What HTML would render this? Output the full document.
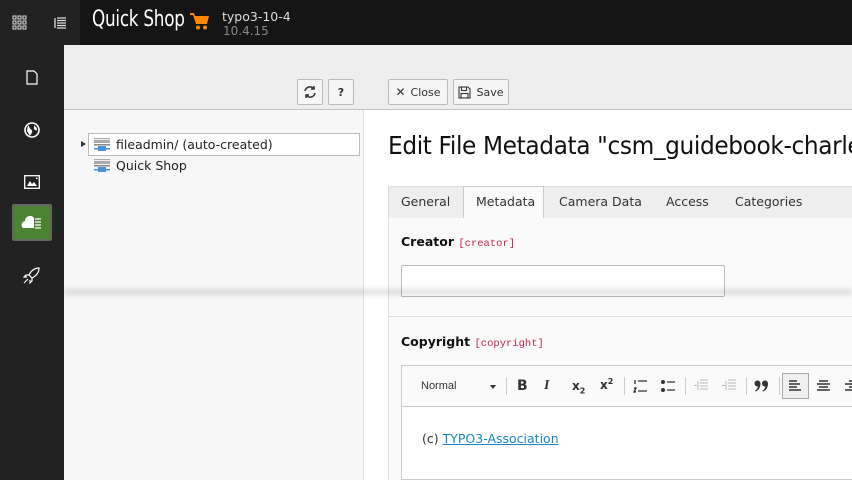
<!DOCTYPE html>
<html><head><meta charset="utf-8"><style>
*{box-sizing:border-box;margin:0;padding:0}
body{width:852px;height:480px;overflow:hidden;font-family:"DejaVu Sans","Liberation Sans",sans-serif;font-size:12px;color:#333;background:#fff;position:relative}
.abs{position:absolute}
.top{left:0;top:0;width:852px;height:45px;background:#151515}
.tl{left:0;top:0;width:80px;height:45px;background:#222}
.side{left:0;top:45px;width:64px;height:435px;background:#222}
.dh{left:64px;top:45px;width:788px;height:65px;background:#eee;border-bottom:1px solid #c3c3c3}
.tree{left:64px;top:110px;width:300px;height:370px;background:#f7f7f7;border-right:1px solid #e0e0e0}
.btn{background:#f5f5f5;border:1px solid #bbb;border-radius:2px;height:26px;font-size:11px;color:#333;display:flex;align-items:center;justify-content:center}
.tab{top:186px;height:32px;line-height:30px;font-size:12.5px;color:#333;padding:0 12px}
</style></head><body>
<div class="abs top"></div><div class="abs tl"></div>
<div class="abs side"></div>
<svg class="abs" style="left:12px;top:15px" width="15" height="15" viewBox="0 0 15 15" fill="none" stroke="#ddd" stroke-width="1"><rect x="1" y="1" width="3" height="3"/><rect x="6" y="1" width="3" height="3"/><rect x="11" y="1" width="3" height="3"/><rect x="1" y="6" width="3" height="3"/><rect x="6" y="6" width="3" height="3"/><rect x="11" y="6" width="3" height="3"/><rect x="1" y="11" width="3" height="3"/><rect x="6" y="11" width="3" height="3"/><rect x="11" y="11" width="3" height="3"/></svg>
<svg class="abs" style="left:54px;top:17px" width="13" height="12" viewBox="0 0 13 12" stroke="#ddd" stroke-width="1.3"><path d="M1 1v10M3 1h9M3 3.5h9M3 6h9M3 8.5h9M3 11h9"/></svg>
<div class="abs" style="left:92px;top:7px;font-family:'DejaVu Sans Condensed','Liberation Sans Narrow',sans-serif;font-size:22px;color:#fff;letter-spacing:-0.3px;transform:scaleX(0.85);transform-origin:left;white-space:nowrap">Quick Shop</div>
<svg class="abs" style="left:190px;top:13px" width="19" height="17" viewBox="0 0 19 17" fill="#ff8700"><path d="M0 0h4l1 3h14l-2 8H6L3 2H0z"/><circle cx="8" cy="14.5" r="2"/><circle cx="15" cy="14.5" r="2"/></svg>
<div class="abs" style="left:222px;top:9px;color:#ddd;font-size:12.5px">typo3-10-4</div>
<div class="abs" style="left:223px;top:24px;color:#888;font-size:12px">10.4.15</div>
<svg class="abs" style="left:26px;top:70px" width="12" height="15" viewBox="0 0 12 15" fill="none" stroke="#fff" stroke-width="1.2"><path d="M1 1h7l3 3v10H1z"/></svg>
<svg class="abs" style="left:24px;top:122px" width="16" height="16" viewBox="0 0 16 16"><circle cx="8" cy="8" r="7" fill="none" stroke="#fff" stroke-width="1.6"/><path d="M4 3.5c2 1 1 3 3 4s1 3 0 5l-1.5 1C5 11 3 10.5 3 8.5zM10 3c1 2 3 2 3 5-1 1-2 0-3-1z" fill="#fff"/></svg>
<svg class="abs" style="left:24px;top:175px" width="16" height="14" viewBox="0 0 16 14"><rect x="0.7" y="0.7" width="14.6" height="12.6" fill="none" stroke="#fff" stroke-width="1.3"/><path d="M3 11l3-5 2 3 2-2 3 4z" fill="#fff"/><rect x="12" y="2.5" width="1.5" height="1.5" fill="#fff"/></svg>
<div class="abs" style="left:12px;top:204px;width:40px;height:37px;background:#4b8333;border:2px solid #666;border-radius:2px"></div>
<svg class="abs" style="left:21px;top:214px" width="22" height="16" viewBox="0 0 22 16"><path d="M2 14a4 4 0 0 1 2-7 5 5 0 0 1 9-3v10z" fill="#fff"/><path d="M14 5h6M14 8h6M14 11h6M14 14h6" stroke="#fff" stroke-width="1.2"/></svg>
<svg class="abs" style="left:23px;top:267px" width="17" height="17" viewBox="0 0 17 17" fill="none" stroke="#fff" stroke-width="1.2"><path d="M16 1c-5 0-8 3-10 7l3 3c4-2 7-5 7-10zM6 8H3l-2 2 3 0M9 11v3l-2 2 0-3M5 12l-4 4"/></svg>
<div class="abs dh"></div>
<div class="abs tree"></div>
<div class="abs btn" style="left:297px;top:79px;width:26px"><svg width="14" height="14" viewBox="0 0 14 14" fill="none" stroke="#333" stroke-width="1.5"><path d="M2 6a5 5 0 0 1 9-2M12 8a5 5 0 0 1-9 2"/><path d="M11 1v3H8M3 13v-3h3"/></svg></div>
<div class="abs btn" style="left:328px;top:79px;width:26px;font-weight:bold">?</div>
<div class="abs btn" style="left:388px;top:79px;width:60px"><b style="font-size:12px;margin-right:5px">✕</b>Close</div>
<div class="abs btn" style="left:453px;top:79px;width:56px"><svg width="13" height="13" viewBox="0 0 13 13" fill="none" stroke="#333" stroke-width="1.1" style="margin-right:5px"><path d="M1 1h9l2 2v9H1z"/><rect x="3.5" y="1" width="5" height="3.5"/><rect x="3" y="7.5" width="7" height="4.5"/></svg>Save</div>
<div class="abs" style="left:81px;top:141px;border-left:5px solid #333;border-top:3.5px solid transparent;border-bottom:3.5px solid transparent"></div>
<div class="abs" style="left:88px;top:133px;width:272px;height:23px;border:1px solid #bbb;background:#fff"></div>
<svg class="abs" style="left:93px;top:137px" width="18" height="15" viewBox="0 0 18 15"><rect x="1" y="1" width="16" height="5" fill="#aaa"/><rect x="1" y="2" width="16" height="1" fill="#eee"/><rect x="1" y="7" width="16" height="1.5" fill="#888"/><rect x="5" y="9" width="8" height="5" fill="#4a8fd8"/><rect x="1" y="11" width="16" height="1.5" fill="#4a8fd8"/></svg>
<div class="abs" style="left:116px;top:137px;font-size:12.5px;color:#222">fileadmin/ (auto-created)</div>
<svg class="abs" style="left:93px;top:158px" width="18" height="15" viewBox="0 0 18 15"><rect x="1" y="1" width="16" height="5" fill="#aaa"/><rect x="1" y="2" width="16" height="1" fill="#eee"/><rect x="1" y="7" width="16" height="1.5" fill="#888"/><rect x="5" y="9" width="8" height="5" fill="#4a8fd8"/><rect x="1" y="11" width="16" height="1.5" fill="#4a8fd8"/></svg>
<div class="abs" style="left:116px;top:158px;font-size:12.5px;color:#222">Quick Shop</div>
<div class="abs" style="left:388px;top:131px;width:464px;height:36px;overflow:hidden"><div style="font-size:25px;color:#111;white-space:nowrap;letter-spacing:-0.4px;transform:scaleX(0.93);transform-origin:left">Edit File Metadata "csm_guidebook-charleston</div></div>
<div class="abs" style="left:388px;top:186px;width:464px;height:33px;background:#eee;border:1px solid #ddd;border-right:none"></div>
<div class="abs tab" style="left:389px;top:187px">General</div>
<div class="abs tab" style="left:463px;width:81px;background:#fafafa;border:1px solid #ccc;border-bottom:none;height:33px;top:186px">Metadata</div>
<div class="abs tab" style="left:547px;top:187px">Camera Data</div>
<div class="abs tab" style="left:654px;top:187px">Access</div>
<div class="abs tab" style="left:723px;top:187px">Categories</div>
<div class="abs" style="left:388px;top:218px;width:464px;height:262px;background:#fafafa;border-left:1px solid #ddd"></div>
<div class="abs" style="left:401px;top:234px;font-weight:bold;font-size:12.5px;color:#111">Creator <span style="font-family:'Liberation Mono',monospace;font-weight:normal;font-size:10.5px;color:#c7254e">[creator]</span></div>
<div class="abs" style="left:401px;top:265px;width:324px;height:32px;background:#fefefe;border:1px solid #bbb;border-radius:2px"></div>
<div class="abs" style="left:388px;top:316px;width:464px;height:1px;background:#ddd"></div>
<div class="abs" style="left:401px;top:334px;font-weight:bold;font-size:12.5px;color:#111">Copyright <span style="font-family:'Liberation Mono',monospace;font-weight:normal;font-size:10.5px;color:#c7254e">[copyright]</span></div>
<div class="abs" style="left:401px;top:365px;width:451px;height:115px;border:1px solid #ccc;border-right:none;background:#fff"></div>
<div class="abs" style="left:402px;top:366px;width:450px;height:41px;background:#fafafa;border-bottom:1px solid #ccc"></div>
<div class="abs" style="left:421px;top:380px;font-size:11px;font-family:'Liberation Sans',sans-serif;color:#333">Normal</div>
<div class="abs" style="left:490px;top:385px;border-top:4px solid #333;border-left:3px solid transparent;border-right:3px solid transparent"></div>
<div class="abs" style="left:506px;top:377px;width:1px;height:18px;background:#ccc"></div>
<div class="abs" style="left:517px;top:378px;font-weight:bold;font-size:14px;color:#333">B</div>
<div class="abs" style="left:544px;top:378px;font-style:italic;font-size:14px;color:#333;font-family:'Liberation Serif',serif;font-weight:bold">I</div>
<div class="abs" style="left:572px;top:379px;font-size:12px;font-weight:bold;color:#333">x<sub style="font-size:8px">2</sub></div>
<div class="abs" style="left:600px;top:377px;font-size:12px;font-weight:bold;color:#333">x<sup style="font-size:8px">2</sup></div>
<div class="abs" style="left:624px;top:377px;width:1px;height:18px;background:#ccc"></div>
<svg class="abs" style="left:633px;top:379px" width="14" height="14" viewBox="0 0 14 14" stroke="#333" stroke-width="1.3"><path d="M5 2h9M5 12h9M2 1v4M1 9h2l-2 4h2"/></svg>
<svg class="abs" style="left:661px;top:379px" width="14" height="14" viewBox="0 0 14 14"><circle cx="2" cy="3" r="2" fill="#333"/><circle cx="2" cy="11" r="2" fill="#333"/><path d="M6 3h8M6 11h8" stroke="#333" stroke-width="1.3"/></svg>
<div class="abs" style="left:685px;top:377px;width:1px;height:18px;background:#ccc"></div>
<svg class="abs" style="left:694px;top:379px" width="14" height="13" viewBox="0 0 14 13" stroke="#bbb" stroke-width="1"><path d="M6 1h8M6 4h8M6 7h8M6 10h8M4 2v9M3 6.5H0"/></svg>
<svg class="abs" style="left:722px;top:379px" width="14" height="13" viewBox="0 0 14 13" stroke="#bbb" stroke-width="1"><path d="M6 1h8M6 4h8M6 7h8M6 10h8M4 2v9M0 6.5h3"/></svg>
<div class="abs" style="left:746px;top:377px;width:1px;height:18px;background:#ccc"></div>
<svg class="abs" style="left:754px;top:380px" width="15" height="12" viewBox="0 0 15 12" fill="#333"><circle cx="3.5" cy="3.5" r="3"/><path d="M6.5 3.5c0 4-2 7-5 8l-.5-1c2-1 3-3 3-5z"/><circle cx="11" cy="3.5" r="3"/><path d="M14 3.5c0 4-2 7-5 8l-.5-1c2-1 3-3 3-5z"/></svg>
<div class="abs" style="left:779px;top:377px;width:1px;height:18px;background:#ccc"></div>
<div class="abs" style="left:782px;top:373px;width:27px;height:26px;border:1px solid #aaa;background:#f0f0f0"></div>
<svg class="abs" style="left:789px;top:380px" width="13" height="12" viewBox="0 0 13 12" stroke="#333" stroke-width="1.5"><path d="M0 1h8M0 4h11M0 7h8M0 10h12"/></svg>
<svg class="abs" style="left:817px;top:380px" width="13" height="12" viewBox="0 0 13 12" stroke="#333" stroke-width="1.5"><path d="M2 1h9M0 4h13M2 7h9M0 10h13"/></svg>
<svg class="abs" style="left:845px;top:380px" width="7" height="12" viewBox="0 0 7 12" stroke="#333" stroke-width="1.5"><path d="M4 1h9M0 4h13M4 7h9M0 10h13"/></svg>
<div class="abs" style="left:422px;top:431px;font-size:12.5px;color:#333">(c) <span style="color:#1a88c9;text-decoration:underline">TYPO3-Association</span></div>
<div class="abs" style="left:64px;top:287px;width:788px;height:10px;background:linear-gradient(#0000,#0002,#0000);filter:blur(2px)"></div>
</body></html>
